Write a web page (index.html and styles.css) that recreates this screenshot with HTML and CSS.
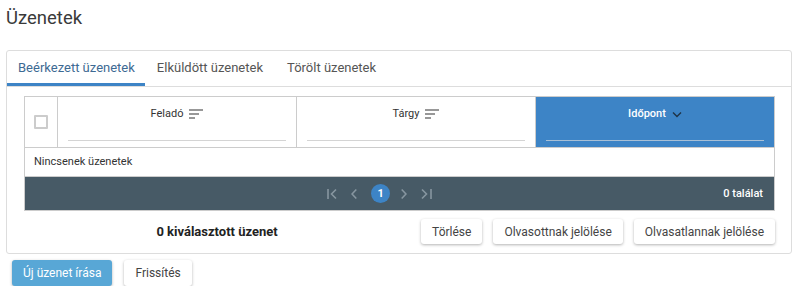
FILE: index.html
```html
<!DOCTYPE html>
<html lang="hu">
<head>
  <meta charset="UTF-8">
  <title>Üzenetek</title>
  <link rel="stylesheet" href="styles.css">
</head>
<body>
  <div class="page">
    <h1>Üzenetek</h1>

    <div class="card">
      <div class="tabs">
        <div class="tab active">Beérkezett üzenetek</div>
        <div class="tab">Elküldött üzenetek</div>
        <div class="tab">Törölt üzenetek</div>
      </div>

      <div class="card-body">
        <div class="grid">
          <div class="grid-head">
            <div class="col-check"><span class="checkbox"></span></div>
            <div class="col">
              <div class="col-title">Feladó
                <svg class="sort" width="14" height="10" viewBox="0 0 14 10"><path d="M0 1h14M0 5h10M0 9h6" stroke="#333" stroke-width="1.2"/></svg>
              </div>
              <div class="col-filter"></div>
            </div>
            <div class="col">
              <div class="col-title">Tárgy
                <svg class="sort" width="14" height="10" viewBox="0 0 14 10"><path d="M0 1h14M0 5h10M0 9h6" stroke="#333" stroke-width="1.2"/></svg>
              </div>
              <div class="col-filter"></div>
            </div>
            <div class="col sorted">
              <div class="col-title">Időpont
                <svg class="chev" width="10" height="7" viewBox="0 0 10 7"><path d="M1 1.5l4 4 4-4" fill="none" stroke="#1f3345" stroke-width="1.4"/></svg>
              </div>
              <div class="col-filter"></div>
            </div>
          </div>
          <div class="grid-empty">Nincsenek üzenetek</div>
          <div class="grid-footer">
            <div class="pager">
              <svg width="10" height="12" viewBox="0 0 10 12"><path d="M1 1v10M9 1.5L4.5 6 9 10.5" fill="none" stroke="#8796a0" stroke-width="1.6"/></svg>
              <svg width="6" height="12" viewBox="0 0 6 12"><path d="M5.3 1.5L1 6l4.3 4.5" fill="none" stroke="#8796a0" stroke-width="1.6"/></svg>
              <span class="page-num">1</span>
              <svg width="6" height="12" viewBox="0 0 6 12"><path d="M0.7 1.5L5 6l-4.3 4.5" fill="none" stroke="#8796a0" stroke-width="1.6"/></svg>
              <svg width="11" height="12" viewBox="0 0 11 12"><path d="M1 1.5L5.5 6 1 10.5M10 1v10" fill="none" stroke="#8796a0" stroke-width="1.6"/></svg>
            </div>
            <div class="count">0 találat</div>
          </div>
        </div>

        <div class="actions">
          <div class="selected-info">0 kiválasztott üzenet</div>
          <button class="btn">Törlése</button>
          <button class="btn">Olvasottnak jelölése</button>
          <button class="btn">Olvasatlannak jelölése</button>
        </div>
      </div>
    </div>

    <div class="bottom-actions">
      <button class="btn btn-primary">Új üzenet írása</button>
      <button class="btn">Frissítés</button>
    </div>
  </div>
</body>
</html>
```

FILE: styles.css
```css
body {
  margin: 0;
  font-family: Roboto, "Liberation Sans", sans-serif;
  color: #333;
  background: #fff;
}
.page {
  padding: 0 7px 0 6px;
}
h1 {
  font-size: 18.5px;
  font-weight: 400;
  color: #3a3a3a;
  margin: 0;
  padding-top: 5px;
  height: 45px;
  line-height: 26px;
}
.card {
  border: 1px solid #ddd;
  border-radius: 3px;
}
.tabs {
  display: flex;
  height: 35px;
  border-bottom: 1px solid #ddd;
}
.tab {
  padding: 0 12px;
  font-size: 13px;
  line-height: 33px;
  color: #555;
  border-bottom: 3px solid transparent;
}
.tab:first-child {
  padding-left: 11px;
  padding-right: 10px;
}
.tab.active {
  color: #3d6a93;
  border-bottom-color: #3d84c6;
}
.card-body {
  padding: 9px 16px 9px 17px;
}
.grid {
  border: 1px solid #ccc;
}
.grid-head {
  display: flex;
  height: 50px;
  border-bottom: 1px solid #ccc;
}
.col-check {
  width: 32px;
  border-right: 1px solid #ccc;
  display: flex;
  align-items: center;
  justify-content: center;
}
.checkbox {
  width: 10px;
  height: 10px;
  border: 2px solid #ccc;
  border-radius: 1px;
}
.col {
  flex: 1;
  border-right: 1px solid #ccc;
  padding: 0 10px;
  display: flex;
  flex-direction: column;
}
.col:last-child {
  border-right: none;
}
.col-title {
  font-size: 11px;
  text-align: center;
  margin-top: 10px;
  height: 14px;
  line-height: 14px;
  display: flex;
  align-items: center;
  justify-content: center;
  gap: 6px;
}
.col-filter {
  margin-top: 19px;
  border-bottom: 1px solid #d4d4d4;
}
.col.sorted {
  background: #3d84c6;
  color: #fff;
}
.col.sorted .col-title {
  font-weight: 500;
}
.col.sorted .col-filter {
  border-bottom-color: #a9c0d6;
}
.grid-empty {
  height: 28px;
  line-height: 28px;
  padding-left: 9px;
  font-size: 11px;
  border-bottom: 1px solid #ccc;
}
.grid-footer {
  height: 33px;
  background: #475a66;
  display: flex;
  align-items: center;
  padding: 0 11px;
}
.pager {
  margin: 0 auto;
  display: flex;
  align-items: center;
  gap: 14px;
}
.page-num {
  width: 19px;
  height: 19px;
  border-radius: 50%;
  background: #3d84c6;
  color: #fff;
  font-size: 11px;
  font-weight: 700;
  line-height: 19px;
  text-align: center;
  margin-right: -3px;
}
.count {
  color: #fff;
  font-size: 11px;
  font-weight: 500;
}
.actions {
  display: flex;
  align-items: center;
  gap: 11px;
  margin-top: 8px;
}
.selected-info {
  flex: 1;
  text-align: center;
  font-size: 13px;
  font-weight: 700;
  color: #222;
}
.btn {
  font-family: Roboto, "Liberation Sans", sans-serif;
  font-size: 12px;
  color: #444;
  background: #fff;
  border: none;
  border-radius: 3px;
  height: 25px;
  padding: 0 11px;
  box-shadow: 0 1px 3px rgba(0,0,0,0.3);
  cursor: pointer;
}
.bottom-actions {
  display: flex;
  gap: 12px;
  padding: 6px 0 0 6px;
}
.bottom-actions .btn {
  height: 26px;
  padding: 0 11px;
}
.btn-primary {
  background: #58a7d6;
  color: #fff;
}
```
